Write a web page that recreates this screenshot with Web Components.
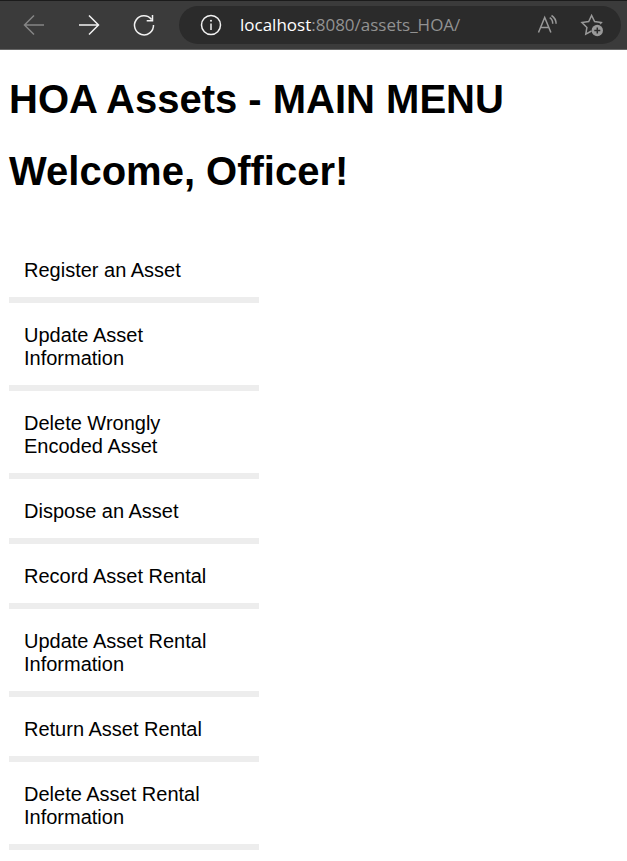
<!DOCTYPE html>
<html lang="en">
<head>
<meta charset="utf-8">
<title>HOA Assets</title>
<style>
body { margin: 0; background: #fff; color: #000; font-family: "Liberation Sans", Arial, sans-serif; }
</style>
</head>
<body>
<browser-bar>
  <tool-button slot="nav" label="Back" disabled>
    <svg width="24" height="24" viewBox="0 0 24 24"><path d="M22 12H2.500M12 2.500 2.500 12l9.500 9.500"/></svg>
  </tool-button>
  <tool-button slot="nav" label="Forward">
    <svg width="24" height="24" viewBox="0 0 24 24"><path d="M2 12h19.500M12 2.500l9.500 9.500-9.500 9.500"/></svg>
  </tool-button>
  <tool-button slot="nav" label="Refresh">
    <svg width="24" height="24" viewBox="0 0 24 24"><path d="M19.500 6.500A9.500 9.500 0 1 0 21.500 12M20.500 2v5.800h-5.800"/></svg>
  </tool-button>
  <address-box host="localhost" path=":8080/assets_HOA/"></address-box>
</browser-bar>
<menu-page>
  <span slot="title">HOA Assets - MAIN MENU</span>
  <span slot="greeting">Welcome, Officer!</span>
  <menu-item>Register an Asset</menu-item>
  <menu-item>Update Asset Information</menu-item>
  <menu-item>Delete Wrongly Encoded Asset</menu-item>
  <menu-item>Dispose an Asset</menu-item>
  <menu-item>Record Asset Rental</menu-item>
  <menu-item>Update Asset Rental Information</menu-item>
  <menu-item>Return Asset Rental</menu-item>
  <menu-item>Delete Asset Rental Information</menu-item>
</menu-page>

<script>
class ToolButton extends HTMLElement {
  connectedCallback() {
    if (this.shadowRoot) return;
    this.attachShadow({ mode: "open" }).innerHTML = `
      <style>
        :host { display: block; color: #f2f2f2; }
        :host([disabled]) { color: #858585; }
        :host([quiet]) { color: #999; }
        button { display: flex; padding: 0; border: 0; background: none; color: inherit; }
        ::slotted(svg) { display: block; fill: none; stroke: currentColor; stroke-width: 1.5; }
      </style>
      <button type="button"><slot></slot></button>`;
    const button = this.shadowRoot.querySelector("button");
    button.setAttribute("aria-label", this.getAttribute("label"));
    button.disabled = this.hasAttribute("disabled");
  }
}
customElements.define("tool-button", ToolButton);

class AddressBox extends HTMLElement {
  connectedCallback() {
    if (this.shadowRoot) return;
    this.attachShadow({ mode: "open" }).innerHTML = `
      <style>
        :host { display: flex; flex: 1; min-width: 0; align-items: center; box-sizing: border-box;
          height: 38px; padding: 0 17px 0 20px; border-radius: 19px; background: #2b2b2b; }
        .url { flex: 1; min-width: 0; margin-left: 17px; overflow: hidden; white-space: nowrap;
          font: 17px/26px "Segoe UI", "Open Sans", sans-serif; color: #929292; outline: 0; }
        .host { color: #fff; }
        .tools { display: flex; gap: 20px; }
      </style>
      <tool-button label="Site information">
        <svg width="24" height="24" viewBox="0 0 24 24"><circle cx="12" cy="12" r="9.500"/><path d="M12 10.500v6.500"/><circle cx="12" cy="7.700" r="1" fill="currentColor" stroke="none"/></svg>
      </tool-button>
      <div class="url" role="textbox" contenteditable="true" spellcheck="false" aria-label="Address"><span class="host"></span><span class="path"></span></div>
      <div class="tools">
        <tool-button quiet label="Read aloud">
          <svg width="24" height="24" viewBox="0 0 24 24"><path d="M2.500 19.500 8.700 4.500l6.200 15M4.600 14.500h8.200M13.700 4.700a7 7 0 0 1 3 6.100M15.500 2.500a10 10 0 0 1 4.600 8.300"/></svg>
        </tool-button>
        <tool-button quiet label="Add to favorites">
          <svg width="24" height="24" viewBox="0 0 24 24"><path d="M11.500 18 5.800 21.200 6.900 14.400 2 9.600l6.700-1L11.600 2.500l3 6.100 6.700 1-1.300 1.400"/><circle cx="17.300" cy="17.500" r="5.700" fill="currentColor" stroke="none"/><path d="M17.300 14.500v6M14.300 17.500h6" stroke="#2b2b2b"/></svg>
        </tool-button>
      </div>`;
    this.shadowRoot.querySelector(".host").textContent = this.getAttribute("host");
    this.shadowRoot.querySelector(".path").textContent = this.getAttribute("path");
  }
}
customElements.define("address-box", AddressBox);

class BrowserBar extends HTMLElement {
  connectedCallback() {
    if (this.shadowRoot) return;
    this.attachShadow({ mode: "open" }).innerHTML = `
      <style>
        :host { display: flex; align-items: center; box-sizing: border-box; height: 50px;
          padding: 0 6px 0 22px; gap: 23px; background: #3b3b3b;
          border-top: 1px solid #1b1b1b; border-bottom: 1px solid #666; }
        nav { display: flex; gap: 31px; }
      </style>
      <nav aria-label="Browser"><slot name="nav"></slot></nav>
      <slot></slot>`;
  }
}
customElements.define("browser-bar", BrowserBar);

class MenuPage extends HTMLElement {
  connectedCallback() {
    if (this.shadowRoot) return;
    this.attachShadow({ mode: "open" }).innerHTML = `
      <style>
        :host { display: block; padding: 26px 9px 9px; }
        h1 { margin: 0 0 26px; font-size: 40px; line-height: 46px; font-weight: bold; }
        nav { max-width: 250px; margin-top: 44px; }
        h1:last-of-type { margin-bottom: 0; }
      </style>
      <h1><slot name="title"></slot></h1>
      <h1><slot name="greeting"></slot></h1>
      <nav aria-label="Main menu"><slot></slot></nav>`;
  }
}
customElements.define("menu-page", MenuPage);

class MenuItem extends HTMLElement {
  connectedCallback() {
    if (this.shadowRoot) return;
    this.attachShadow({ mode: "open" }).innerHTML = `
      <style>
        :host { display: block; border-bottom: 6px solid #ededed; }
        a { display: block; padding: 21px 30px 15px 15px; color: #000; text-decoration: none;
          font-size: 20px; line-height: 23px; }
      </style>
      <a href="#"><slot></slot></a>`;
  }
}
customElements.define("menu-item", MenuItem);
</script>
</body>
</html>
